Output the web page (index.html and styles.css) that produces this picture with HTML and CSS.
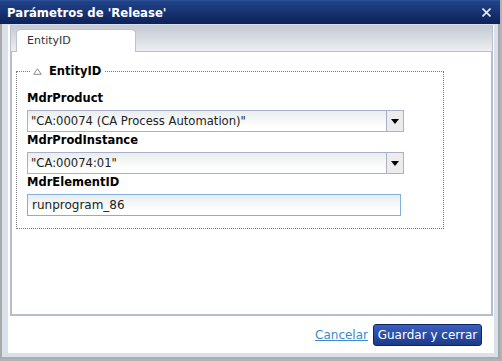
FILE: index.html
```html
<!DOCTYPE html>
<html lang="es">
<head>
    <meta charset="UTF-8">
    <title>Parámetros de 'Release'</title>
    <link rel="stylesheet" href="styles.css">
</head>
<body>
    <div class="dialog">
        <div class="titlebar">
            <span class="title">Parámetros de 'Release'</span>
            <svg class="close" width="9" height="9" viewBox="0 0 9 9">
                <path d="M0.5 0.5 L8.5 8.5 M8.5 0.5 L0.5 8.5" stroke="#e8ecf4" stroke-width="1.6" fill="none"/>
            </svg>
        </div>
        <div class="frame">
            <div class="inner">
                <div class="tabs">
                    <div class="tab">EntityID</div>
                </div>
                <div class="panel">
                    <fieldset class="group">
                        <legend>
                            <svg class="toggle" width="9" height="7" viewBox="0 0 9 7">
                                <path d="M4.5 0.8 L8.3 6.3 L0.7 6.3 Z" stroke="#8a8a8a" stroke-width="1" fill="#fff"/>
                            </svg>
                            EntityID
                        </legend>
                        <label class="field-label">MdrProduct</label>
                        <div class="select">
                            <span class="value">"CA:00074 (CA Process Automation)"</span>
                            <span class="trigger">
                                <svg width="8" height="5" viewBox="0 0 8 5"><path d="M0 0 H8 L4 5 Z" fill="#000"/></svg>
                            </span>
                        </div>
                        <label class="field-label">MdrProdInstance</label>
                        <div class="select">
                            <span class="value">"CA:00074:01"</span>
                            <span class="trigger">
                                <svg width="8" height="5" viewBox="0 0 8 5"><path d="M0 0 H8 L4 5 Z" fill="#000"/></svg>
                            </span>
                        </div>
                        <label class="field-label">MdrElementID</label>
                        <input class="text-input" type="text" value="runprogram_86">
                    </fieldset>
                </div>
                <div class="footer">
                    <a class="link" href="#">Cancelar</a>
                    <button class="primary">Guardar y cerrar</button>
                </div>
            </div>
        </div>
    </div>
</body>
</html>
```

FILE: styles.css
```css
* {
    box-sizing: border-box;
    margin: 0;
    padding: 0;
}

body {
    background: #b3b3b3;
    font-family: "DejaVu Sans", Verdana, sans-serif;
    font-size: 11px;
    color: #222;
}

.dialog {
    width: 500px;
}

.titlebar {
    height: 24px;
    display: flex;
    align-items: center;
    justify-content: space-between;
    padding: 0 9px 0 7px;
    background: linear-gradient(#22438a, #0c2259);
    border-top: 1px solid #2c4f98;
}

.title {
    color: #fff;
    font-weight: bold;
    font-size: 11.7px;
}

.close {
    display: block;
}

.frame {
    background: #d9e0ea;
    border-left: 2px solid #a9a9a9;
    border-right: 2px solid #a4a9b0;
    border-bottom: 2px solid #a9acb0;
    padding: 1px 4px 4px 6px;
}

.inner {
    background: #fff;
    height: 328px;
    display: flex;
    flex-direction: column;
}

.tabs {
    height: 27px;
    margin: 0 1px 0 2px;
    padding: 4px 0 0 5px;
    background: linear-gradient(#c4cad3, #eceef1);
    border: 1px solid #b7c0cc;
    border-top: none;
    display: flex;
}

.tab {
    width: 120px;
    height: 23px;
    margin-bottom: -1px;
    padding: 4px 0 0 10px;
    background: #fff;
    border: 1px solid #b9c3cf;
    border-bottom: none;
    border-radius: 5px 5px 0 0;
    font-size: 11px;
    color: #333;
}

.panel {
    height: 264px;
    margin: 0 1px 0 2px;
    border: 2px solid #b5bfcc;
    border-top: none;
    padding: 11px 0 0 4px;
}

.group {
    width: 428px;
    border: 1px dotted #7a7a7a;
    padding: 11px 10px 12px 10px;
}

.group legend {
    margin-left: 3px;
    padding: 0 3px 0 3px;
    font-weight: bold;
    font-size: 11.5px;
    line-height: 16px;
    color: #000;
}

.toggle {
    margin-right: 3px;
    vertical-align: 0;
}

.field-label {
    display: block;
    font-weight: bold;
    font-size: 11.5px;
    line-height: 16px;
    color: #000;
    margin: 0 0 4px;
}

.select {
    width: 377px;
    height: 22px;
    display: flex;
    border: 1px solid #abb0c8;
    background: linear-gradient(#e9eded, #fff 80%);
}

.select .value {
    flex: 1;
    padding: 3px 0 0 3px;
    font-size: 11.6px;
}

.select .trigger {
    width: 17px;
    border-left: 1px solid #abb0c8;
    background: #ececec;
    display: flex;
    justify-content: center;
    padding-top: 8px;
}

.select .trigger svg {
    display: block;
}

.text-input {
    width: 374px;
    height: 22px;
    border: 1px solid #80b0dc;
    background: linear-gradient(#e9eded, #fff 80%);
    padding: 0 4px;
    font-family: inherit;
    font-size: 12px;
    color: #222;
    outline: none;
}

.footer {
    flex: 1;
    display: flex;
    justify-content: flex-end;
    align-items: center;
    gap: 5px;
    padding: 0 12px 0 0;
}

.link {
    color: #3c8ad0;
    font-size: 12px;
}

.primary {
    width: 109px;
    height: 22px;
    border: 1px solid #0f245e;
    border-radius: 3px;
    background: linear-gradient(#3a5fc0, #1b3a8a);
    color: #fff;
    font-family: inherit;
    font-size: 12px;
}
```
